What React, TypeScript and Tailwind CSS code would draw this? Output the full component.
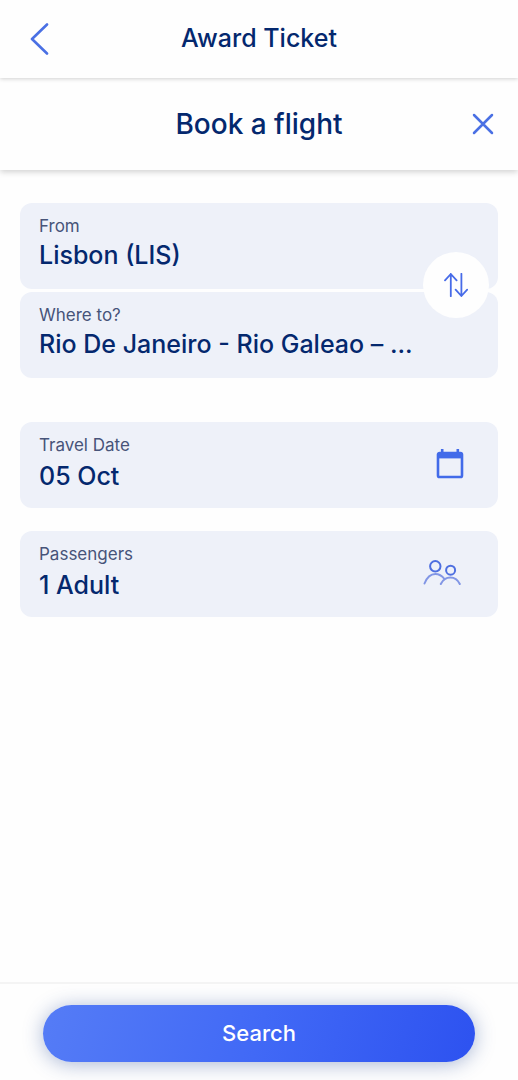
import { useId, type ReactNode } from "react";

type FieldProps = {
  label: string;
  value: string;
  className?: string;
  action?: ReactNode;
};

function Field({ label, value, className = "gap-1.5", action }: FieldProps) {
  const id = useId();

  return (
    <div className="flex h-[86px] items-start rounded-xl bg-[#eef1f9] pl-[19px] pt-[13px]">
      <div className={`flex min-w-0 flex-1 flex-col ${className}`}>
        <label htmlFor={id} className="text-[17px] leading-5 text-[#475479]">
          {label}
        </label>
        <input
          id={id}
          type="text"
          readOnly
          defaultValue={value}
          className="h-8 w-full bg-transparent text-[25px] font-medium text-[#04286e] outline-none"
        />
      </div>
      {action}
    </div>
  );
}

function SwapIcon() {
  return (
    <svg
      viewBox="0 0 24 24"
      className="h-6 w-6"
      fill="none"
      stroke="#476be8"
      strokeWidth="1.8"
      strokeLinecap="round"
      strokeLinejoin="round"
      aria-hidden="true"
    >
      <path d="M6.8 23.2V1M1 7.4 6.8 1l5.8 6.4" />
      <path d="M17.4.8v22.2M11.6 16.6l5.8 6.4 5.8-6.4" />
    </svg>
  );
}

function CalendarIcon() {
  return (
    <svg viewBox="0 0 28 30" className="h-[30px] w-7" fill="none" aria-hidden="true">
      <path d="M6.2 0v4M21.8 0v4" stroke="#426be9" strokeWidth="2.6" />
      <rect x="2" y="4" width="24" height="24" rx="1.6" stroke="#426be9" strokeWidth="2.6" />
      <path d="M2 4h24v5.4H2z" fill="#426be9" />
    </svg>
  );
}

function PassengersIcon() {
  return (
    <svg
      viewBox="0 0 38 26"
      className="h-[26px] w-[38px]"
      fill="none"
      strokeWidth="2"
      strokeLinecap="round"
      aria-hidden="true"
    >
      <path
        d="M1.5 23.5C4.5 16 8 14 12.3 14c4 0 6.6 1.7 9.2 5M17.8 24c2.2-4.5 5.5-6.5 9.6-6.5 4.3 0 7.2 2 9.4 6.5"
        stroke="#8296e5"
      />
      <circle cx="12.3" cy="6.3" r="5.2" stroke="#4e6fe0" />
      <circle cx="27.6" cy="10.2" r="4.5" stroke="#4e6fe0" />
    </svg>
  );
}

export default function App() {
  return (
    <div className="flex min-h-screen flex-col bg-[#fefefe] font-['Inter',sans-serif] text-[#04286e]">
      <header className="relative z-20 grid h-[78px] shrink-0 grid-cols-[80px_1fr_80px] items-center bg-[#fefefe] shadow-[0_1px_4px_rgba(0,0,0,0.18)]">
        <button type="button" aria-label="Back" className="flex h-12 items-center pl-[30px]">
          <svg
            viewBox="0 0 20 32"
            className="h-8 w-5"
            fill="none"
            stroke="#4a70e4"
            strokeWidth="2.6"
            strokeLinecap="round"
            strokeLinejoin="round"
            aria-hidden="true"
          >
            <path d="M17 1.5 2 16l15 14.5" />
          </svg>
        </button>
        <h1 className="text-center text-[25px] font-medium">Award Ticket</h1>
      </header>

      <div className="relative z-10 grid h-[92px] shrink-0 grid-cols-[80px_1fr_80px] items-center bg-[#fefefe] shadow-[0_2px_6px_rgba(0,0,0,0.18)]">
        <h2 className="col-start-2 text-center text-[28px] font-medium">Book a flight</h2>
        <button type="button" aria-label="Close" className="flex h-12 items-center justify-end pr-6">
          <svg
            viewBox="0 0 22 22"
            className="h-[22px] w-[22px]"
            fill="none"
            stroke="#4a70e4"
            strokeWidth="2.5"
            strokeLinecap="round"
            aria-hidden="true"
          >
            <path d="m2 2 18 18M20 2 2 20" />
          </svg>
        </button>
      </div>

      <main className="flex-1 px-5 pb-8 pt-[33px]">
        <form id="flight-search">
          <div className="relative flex flex-col gap-[3px]">
            <Field label="From" value="Lisbon (LIS)" className="gap-1" />
            <Field label="Where to?" value="Rio De Janeiro - Rio Galeao – ..." className="gap-1" />
            <button
              type="button"
              aria-label="Swap cities"
              className="absolute right-[9px] top-[49px] flex h-[66px] w-[66px] items-center justify-center rounded-full bg-[#fefefe]"
            >
              <SwapIcon />
            </button>
          </div>

          <div className="mt-11 flex flex-col gap-[23px]">
            <Field
              label="Travel Date"
              value="05 Oct"
              action={
                <button type="button" aria-label="Choose date" className="mr-[34px] mt-[14px]">
                  <CalendarIcon />
                </button>
              }
            />
            <Field
              label="Passengers"
              value="1 Adult"
              action={
                <button type="button" aria-label="Choose passengers" className="mr-[37px] mt-4">
                  <PassengersIcon />
                </button>
              }
            />
          </div>
        </form>
      </main>

      <footer className="shrink-0 border-t-2 border-[#f4f4f4] bg-[#fefefe] px-[43px] pb-[18px] pt-[21px]">
        <button
          type="submit"
          form="flight-search"
          className="h-[57px] w-full rounded-full bg-linear-[105deg] from-[#557cf6] via-[#4169f6] to-[#2d52f0] text-[22px] font-medium text-white shadow-[0_2px_20px_rgba(40,75,150,0.4)]"
        >
          Search
        </button>
      </footer>
    </div>
  );
}
